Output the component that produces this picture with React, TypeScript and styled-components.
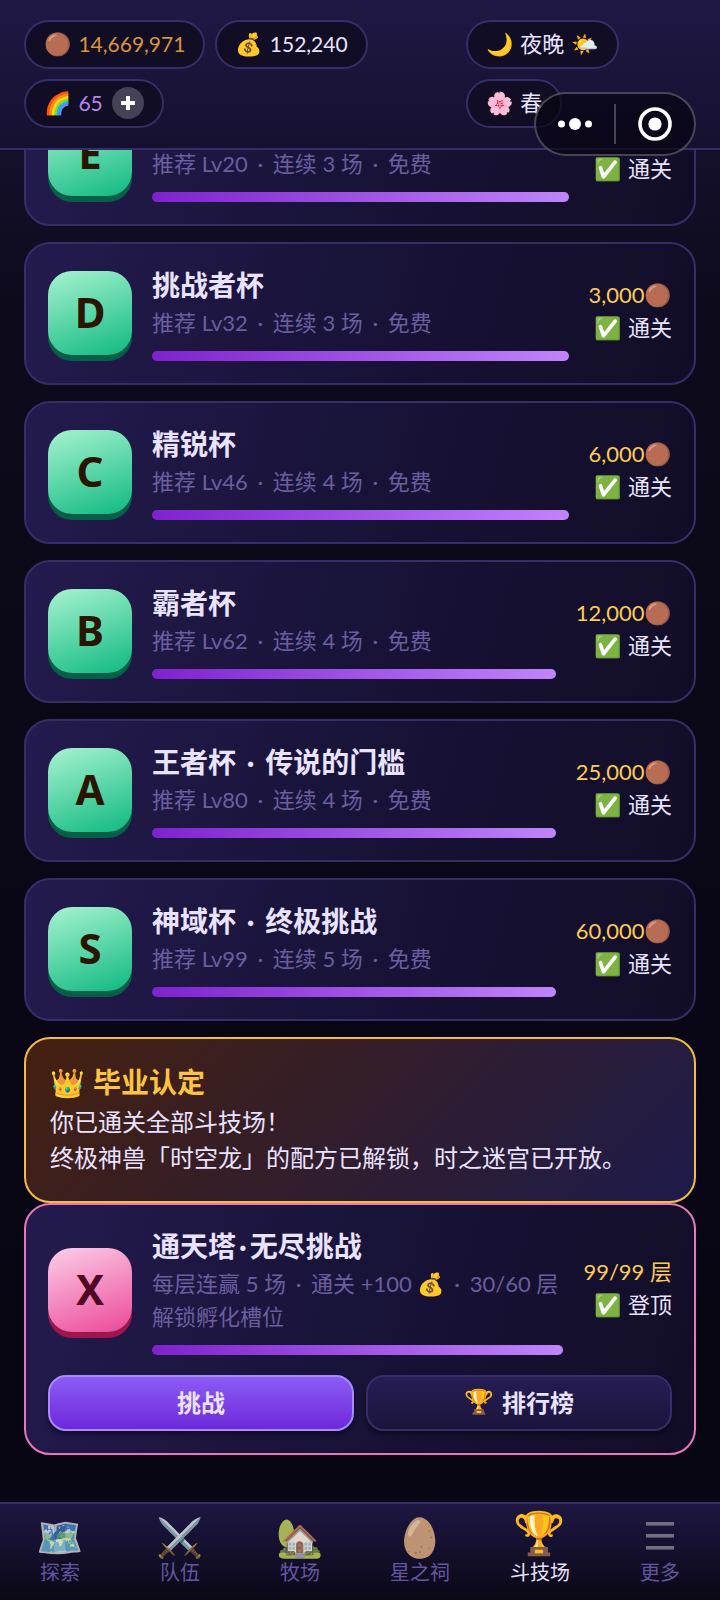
import React, { useLayoutEffect, useRef } from 'react';
import styled, { createGlobalStyle, css } from 'styled-components';

const GlobalStyle = createGlobalStyle`
  *, *::before, *::after { box-sizing: border-box; }
  html, body { margin: 0; background: #080612; }
  body, button {
    font-family: Lato, "Noto Sans CJK SC", "Noto Color Emoji", sans-serif;
  }
`;

const Shell = styled.div`
  display: flex;
  flex-direction: column;
  height: 100vh;
  color: #e9e3ff;
  font-size: 22px;
  line-height: 33px;
  background: linear-gradient(180deg, #1a1438 0%, #0d0a1b 20%, #090715 60%, #080613 100%);
`;

const Header = styled.header`
  display: grid;
  grid-template-columns: 11fr 6fr;
  gap: 20px;
  padding: 20px 24px;
  border-bottom: 2px solid #372d68;
  background: linear-gradient(180deg, #1f1844 0%, #161030 100%);
`;

const PillGroup = styled.div`
  display: flex;
  flex-wrap: wrap;
  align-content: flex-start;
  gap: 10px;
`;

const Pill = styled.div<{ $color?: string }>`
  display: flex;
  align-items: center;
  gap: 7px;
  height: 49px;
  padding: 0 18px 2px;
  border: 2px solid #372d68;
  border-radius: 25px;
  background: #110d24;
  color: ${(p) => p.$color ?? '#e9e3ff'};
  white-space: nowrap;
`;

const Emoji = styled.span`
  font-size: 22px;
`;

const Amount = styled.span`
  font-size: 21px;
`;

const AddButton = styled.button`
  display: grid;
  place-items: center;
  width: 32px;
  height: 32px;
  margin-left: 2px;
  padding: 0;
  border: 0;
  border-radius: 50%;
  background: #464255;
  color: #fff;
`;

const Capsule = styled.div`
  position: fixed;
  top: 92px;
  right: 24px;
  z-index: 2;
  display: flex;
  align-items: center;
  width: 162px;
  height: 64px;
  border: 2px solid rgba(255, 255, 255, 0.25);
  border-radius: 32px;
  background: rgba(8, 4, 16, 0.68);
`;

const CapsuleButton = styled.button`
  flex: 1;
  display: grid;
  place-items: center;
  height: 40px;
  padding: 0;
  border: 0;
  background: none;
  color: #fff;

  & + & {
    border-left: 2px solid rgba(255, 255, 255, 0.25);
  }
`;

const Main = styled.main`
  flex: 1;
  min-height: 0;
  overflow-y: auto;
  scrollbar-width: none;
  padding: 0 24px 47px;
`;

const CupList = styled.div`
  display: flex;
  flex-direction: column;
  gap: 16px;
  margin-bottom: 16px;
`;

const Card = styled.section<{ $accent?: boolean }>`
  padding: 22px;
  border: 2px solid ${(p) => (p.$accent ? '#e879b9' : '#372d68')};
  border-radius: 26px;
  background: linear-gradient(105deg, #231b4e 0%, #181338 50%, #120d26 100%);
`;

const CardRow = styled.div`
  display: flex;
  align-items: center;
  gap: 20px;
`;

const Badge = styled.div<{ $pink?: boolean }>`
  flex: none;
  display: grid;
  place-items: center;
  width: 84px;
  height: 84px;
  margin-bottom: 2px;
  border-radius: 24px;
  font-family: "Noto Sans", "Noto Sans CJK SC", sans-serif;
  font-size: 42px;
  font-weight: 700;
  line-height: 1;
  padding-bottom: 2px;
  ${(p) =>
    p.$pink
      ? css`
          color: #500724;
          background: linear-gradient(160deg, #fbcfe8, #ec4899);
          box-shadow: 0 6px 0 #9d174d;
        `
      : css`
          color: #2a1500;
          background: linear-gradient(160deg, #a7f3d0, #10b981);
          box-shadow: 0 6px 0 #065f46;
        `}
`;

const CardBody = styled.div`
  flex: 1;
  min-width: 0;
`;

const CardTitle = styled.h2`
  margin: 0 0 2px;
  font-size: 28px;
  font-weight: 700;
  line-height: 38px;
`;

const CardDetail = styled.p`
  margin: 0;
  color: #6a5e9f;
`;

const Dot = styled.span<{ $tight?: boolean }>`
  margin: 0 ${(p) => (p.$tight ? 3 : 4)}px;
`;

const Progress = styled.div`
  height: 10px;
  margin-top: 12px;
  border-radius: 5px;
  background: linear-gradient(90deg, #7e22ce, #c084fc);
`;

const Result = styled.div`
  flex: none;
  padding-bottom: 6px;
  text-align: right;
`;

const Reward = styled.div`
  display: flex;
  justify-content: flex-end;
  align-items: center;
  color: #fbcb55;
`;

const Status = styled.div`
  display: flex;
  justify-content: flex-end;
  align-items: center;
  gap: 6px;
`;

const Notice = styled.section`
  padding: 24px 24px 25px;
  border: 2px solid #f5bd3d;
  border-radius: 26px;
  background: linear-gradient(135deg, #45200f 0%, #1e1b4b 100%);
  font-size: 24px;
  line-height: 36px;

  p { margin: 0; }
`;

const NoticeTitle = styled.h2`
  display: flex;
  align-items: center;
  gap: 8px;
  margin: 0 0 3px;
  color: #fcc440;
  font-size: 28px;
  font-weight: 700;
  line-height: 38px;
`;

const Actions = styled.div`
  display: flex;
  gap: 12px;
  margin-top: 20px;
`;

const ActionButton = styled.button<{ $primary?: boolean }>`
  flex: 1;
  display: flex;
  align-items: center;
  justify-content: center;
  gap: 8px;
  height: 56px;
  padding: 0 0 4px;
  border: 2px solid ${(p) => (p.$primary ? '#a78bfa' : '#372d68')};
  border-radius: 18px;
  background: ${(p) =>
    p.$primary
      ? 'linear-gradient(180deg, #8b5cf6, #6d28d9)'
      : 'linear-gradient(180deg, #251d54, #1b153c)'};
  box-shadow: 0 4px 4px rgba(0, 0, 0, 0.4);
  color: #e9e3ff;
  font-size: 24px;
  font-weight: 700;
`;

const Nav = styled.nav`
  display: grid;
  grid-template-columns: repeat(6, 1fr);
  height: 98px;
  border-top: 2px solid #372d68;
  background: linear-gradient(180deg, #1d1742 0%, #0b0816 100%);
`;

const NavLink = styled.a<{ $active?: boolean }>`
  display: flex;
  flex-direction: column;
  align-items: center;
  padding-top: 10px;
  color: ${(p) => (p.$active ? '#e9e0ff' : '#6356a0')};
  font-size: 20px;
  line-height: 28px;
  text-decoration: none;
`;

const NavIcon = styled.span<{ $active?: boolean }>`
  display: grid;
  place-items: center;
  height: 44px;
  ${(p) =>
    p.$active
      ? css`
          padding-bottom: 8px;
          font-size: 42px;
          line-height: 36px;
        `
      : css`
          font-size: 38px;
          line-height: 44px;
          filter: grayscale(0.4);
          opacity: 0.88;
        `}
`;

const Separator = ({ tight }: { tight?: boolean }) => <Dot $tight={tight}>·</Dot>;

const cups = [
  { grade: 'E', title: ['新秀杯'], level: 20, rounds: 3, reward: '1,500' },
  { grade: 'D', title: ['挑战者杯'], level: 32, rounds: 3, reward: '3,000' },
  { grade: 'C', title: ['精锐杯'], level: 46, rounds: 4, reward: '6,000' },
  { grade: 'B', title: ['霸者杯'], level: 62, rounds: 4, reward: '12,000' },
  { grade: 'A', title: ['王者杯', '传说的门槛'], level: 80, rounds: 4, reward: '25,000' },
  { grade: 'S', title: ['神域杯', '终极挑战'], level: 99, rounds: 5, reward: '60,000' },
];

const MenuIcon = () => (
  <svg width="28" height="28" viewBox="0 0 28 28" fill="#7f7a92" aria-hidden="true">
    <rect y="0" width="28" height="3.6" />
    <rect y="12" width="28" height="3.6" />
    <rect y="24" width="28" height="3.6" />
  </svg>
);

const tabs: { label: string; icon: React.ReactNode; active?: boolean }[] = [
  { label: '探索', icon: '🗺️' },
  { label: '队伍', icon: '⚔️' },
  { label: '牧场', icon: '🏡' },
  { label: '星之祠', icon: '🥚' },
  { label: '斗技场', icon: '🏆', active: true },
  { label: '更多', icon: <MenuIcon /> },
];

export default function App() {
  const mainRef = useRef<HTMLElement>(null);

  // The arena opens at its newest challenge, the last card of the list.
  useLayoutEffect(() => {
    const main = mainRef.current;
    if (main) main.scrollTop = main.scrollHeight;
  }, []);

  return (
    <Shell>
      <GlobalStyle />
      <Header>
        <PillGroup>
          <Pill $color="#d9933f"><Emoji>🟤</Emoji><Amount>14,669,971</Amount></Pill>
          <Pill><Emoji>💰</Emoji><Amount>152,240</Amount></Pill>
          <Pill $color="#b486ec">
            <Emoji>🌈</Emoji><Amount>65</Amount>
            <AddButton aria-label="增加">
              <svg width="14" height="14" viewBox="0 0 14 14" fill="currentColor" aria-hidden="true">
                <path d="M5 0h4v5h5v4H9v5H5V9H0V5h5z" />
              </svg>
            </AddButton>
          </Pill>
        </PillGroup>
        <PillGroup>
          <Pill><Emoji>🌙</Emoji>夜晚<Emoji>🌤️</Emoji></Pill>
          <Pill><Emoji>🌸</Emoji>春</Pill>
        </PillGroup>
      </Header>

      <Capsule>
        <CapsuleButton aria-label="菜单">
          <svg width="34" height="12" viewBox="0 0 34 12" fill="currentColor" aria-hidden="true">
            <circle cx="3.5" cy="6" r="3.5" />
            <circle cx="17" cy="6" r="6" />
            <circle cx="30.5" cy="6" r="3.5" />
          </svg>
        </CapsuleButton>
        <CapsuleButton aria-label="关闭">
          <svg width="34" height="34" viewBox="0 0 34 34" aria-hidden="true">
            <circle cx="17" cy="17" r="15" fill="none" stroke="currentColor" strokeWidth="3.6" />
            <circle cx="17" cy="17" r="6.6" fill="currentColor" />
          </svg>
        </CapsuleButton>
      </Capsule>

      <Main ref={mainRef}>
        <CupList>
          {cups.map((cup) => (
            <Card key={cup.grade}>
              <CardRow>
                <Badge>{cup.grade}</Badge>
                <CardBody>
                  <CardTitle>
                    {cup.title[0]}
                    {cup.title[1] && <> <Separator /> {cup.title[1]}</>}
                  </CardTitle>
                  <CardDetail>
                    推荐 Lv{cup.level} <Separator /> 连续 {cup.rounds} 场 <Separator /> 免费
                  </CardDetail>
                  <Progress />
                </CardBody>
                <Result>
                  <Reward>{cup.reward}<Emoji>🟤</Emoji></Reward>
                  <Status><Emoji>✅</Emoji>通关</Status>
                </Result>
              </CardRow>
            </Card>
          ))}
        </CupList>

        <Notice>
          <NoticeTitle><span>👑</span>毕业认定</NoticeTitle>
          <p>你已通关全部斗技场！</p>
          <p>终极神兽「时空龙」的配方已解锁，时之迷宫已开放。</p>
        </Notice>

        <Card $accent>
          <CardRow>
            <Badge $pink>X</Badge>
            <CardBody>
              <CardTitle>通天塔<Separator tight />无尽挑战</CardTitle>
              <CardDetail>
                每层连赢 5 场 <Separator /> 通关 +100 💰 <Separator /> 30/60 层解锁孵化槽位
              </CardDetail>
              <Progress />
            </CardBody>
            <Result>
              <Reward>99/99 层</Reward>
              <Status><Emoji>✅</Emoji>登顶</Status>
            </Result>
          </CardRow>
          <Actions>
            <ActionButton $primary>挑战</ActionButton>
            <ActionButton><span>🏆</span>排行榜</ActionButton>
          </Actions>
        </Card>
      </Main>

      <Nav>
        {tabs.map((tab) => (
          <NavLink key={tab.label} href="#" $active={tab.active}>
            <NavIcon $active={tab.active}>{tab.icon}</NavIcon>
            {tab.label}
          </NavLink>
        ))}
      </Nav>
    </Shell>
  );
}
